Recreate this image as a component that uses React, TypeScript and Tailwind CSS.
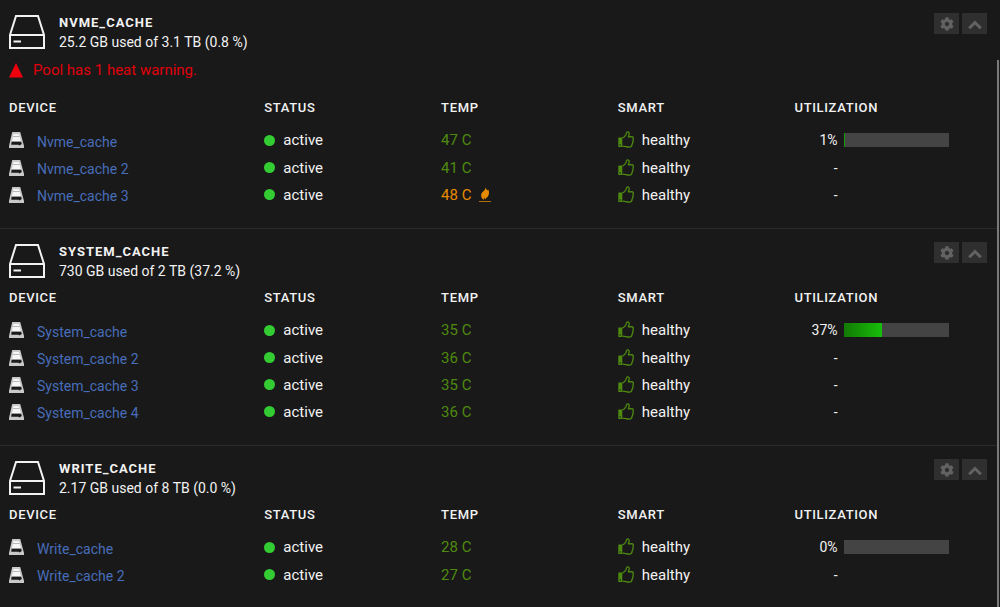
import React from "react";
import { FaCog } from "react-icons/fa";

type Device = { name: string; temp: number; hot?: boolean; use?: number };
type Pool = { name: string; usage: string; warning?: string; devices: Device[] };

const pools: Pool[] = [
  {
    name: "NVME_CACHE",
    usage: "25.2 GB used of 3.1 TB (0.8 %)",
    warning: "Pool has 1 heat warning.",
    devices: [
      { name: "Nvme_cache", temp: 47, use: 1 },
      { name: "Nvme_cache 2", temp: 41 },
      { name: "Nvme_cache 3", temp: 48, hot: true },
    ],
  },
  {
    name: "SYSTEM_CACHE",
    usage: "730 GB used of 2 TB (37.2 %)",
    devices: [
      { name: "System_cache", temp: 35, use: 37 },
      { name: "System_cache 2", temp: 36 },
      { name: "System_cache 3", temp: 35 },
      { name: "System_cache 4", temp: 36 },
    ],
  },
  {
    name: "WRITE_CACHE",
    usage: "2.17 GB used of 8 TB (0.0 %)",
    devices: [
      { name: "Write_cache", temp: 28, use: 0 },
      { name: "Write_cache 2", temp: 27 },
    ],
  },
];

function PoolIcon() {
  return (
    <svg className="h-9 w-9 shrink-0" viewBox="0 0 36 36" fill="none" stroke="#f2f2f2" strokeWidth="2" aria-hidden="true">
      <path d="M1 21 L7 2 H29 L35 21 V34 H1 Z" />
      <path d="M1 21 H35" />
      <path d="M4.5 27.5 H12" />
    </svg>
  );
}

function DiskIcon() {
  return (
    <svg className="h-4 w-4 shrink-0" viewBox="0 0 16 16" aria-hidden="true">
      <path d="M3.2 0 H11.2 L15 14 V16 H0 V14 Z" fill="#c9c9c9" />
      <path d="M4.5 2 H10 L11.8 9 H3 Z" fill="#f6f6f6" />
      <path d="M4 4 H10.6 V5 H4 Z" fill="#b9b9b9" />
      <path d="M2.6 9.8 H12.2 L12.8 12 L10.5 13.4 L9.5 12.8 H2.2 Z" fill="#1b1b1b" />
    </svg>
  );
}

function FireIcon() {
  return (
    <svg className="h-4 w-3" viewBox="0 0 12 16" fill="#e68a00" aria-hidden="true">
      <path d="M6.8 0.5 C7.2 2 7.6 3 8.6 3.2 C9 3.2 9.2 3 9.3 2.6 C10.2 4.4 10.4 7 9.2 9 C8.2 10.6 6.6 11.4 6 12.8 C5.6 12 6 11 6.2 10.4 C5 11 4.8 12 5 12.8 C3 11.8 1.8 9.8 2.2 7.4 C2.6 5 6.2 3.6 6.8 0.5 Z" />
      <path d="M0 14 H12 V15 H0 Z" fillOpacity="0.75" />
    </svg>
  );
}

function ThumbIcon() {
  return (
    <svg className="h-[18px] w-4" viewBox="0 0 16 18" aria-hidden="true">
      <path d="M0.8 6.5 H4.3 V16 H0.8 Q0.3 16 0.3 15.4 V7.1 Q0.3 6.5 0.8 6.5 Z" fill="#4f8a10" />
      <path
        d="M4.5 7 C6.2 6.6 7 5.4 7.8 4 C8.4 2.8 8.2 1 9.4 0.8 C11 0.7 11.6 2.2 11 3.8 L10.4 5.8 L13.8 5.6 C15.1 5.7 15.5 6.8 15.1 8 C15.3 9 15.1 10 14.8 10.8 C14.9 11.8 14.6 12.6 14.1 13.2 C14 15 13.2 16.1 11.4 16.2 C9 16.3 7.6 15.4 4.5 15.1"
        fill="none"
        stroke="#4f8a10"
        strokeWidth="1.3"
        strokeLinejoin="round"
      />
      <circle cx="2.2" cy="14" r="0.7" fill="#191919" />
    </svg>
  );
}

function ChevronIcon() {
  return (
    <svg className="h-3.5 w-3.5" viewBox="0 0 14 14" fill="none" stroke="currentColor" strokeWidth="3" aria-hidden="true">
      <path d="M1.2 11.3 L7 5.5 L12.8 11.3" />
    </svg>
  );
}

function Row({ device }: { device: Device }) {
  const hasUse = device.use !== undefined;
  return (
    <tr className={hasUse ? "h-7" : "h-[27px]"}>
      <td className="p-0">
        <div className="flex items-center gap-3">
          <DiskIcon />
          <a href="#" className="pt-[3px] text-sm text-[#486dba]">{device.name}</a>
        </div>
      </td>
      <td className="p-0">
        <div className="flex items-center gap-2">
          <span className="h-[11px] w-[11px] rounded-full bg-[#33cc33]" />
          <span>active</span>
        </div>
      </td>
      <td className={device.hot ? "p-0 text-[#e68a00]" : "p-0 text-[#4f8a10]"}>
        <div className="flex items-center gap-2">
          <span>{device.temp} C</span>
          {device.hot && <FireIcon />}
        </div>
      </td>
      <td className="p-0">
        <div className="flex items-center gap-2">
          <ThumbIcon />
          <span>healthy</span>
        </div>
      </td>
      <td className="p-0">
        <div className="flex items-center gap-1.5">
          <span className="w-[43px] text-right text-sm">{hasUse ? `${device.use}%` : "-"}</span>
          {hasUse && (
            <div className="h-3.5 w-[105px] bg-[#444444]">
              <div
                className="h-full bg-linear-to-r from-[#127a05] to-[#17bf0b]"
                style={{ width: `${device.use}%` }}
              />
            </div>
          )}
        </div>
      </td>
    </tr>
  );
}

function PoolSection({ pool }: { pool: Pool }) {
  return (
    <section className="border-b border-[#2b2b2b] pt-[13px] pr-1.5 pb-5 pl-[9px]">
      <header className="flex h-[38px] items-center gap-3.5 pr-1">
        <PoolIcon />
        <div className="flex-1">
          <h2 className="text-[13px] leading-5 font-bold tracking-[1px]">{pool.name}</h2>
          <p className="text-sm leading-[18px]">{pool.usage}</p>
        </div>
        <div className="flex gap-[3px] self-start">
          <button type="button" aria-label="Settings" className="flex h-[21px] w-[25px] items-center justify-center bg-[#2f2f2f] text-[#626262]">
            <FaCog className="h-3.5 w-3.5" />
          </button>
          <button type="button" aria-label="Collapse" className="flex h-[21px] w-[25px] items-center justify-center bg-[#2f2f2f] text-[#626262]">
            <ChevronIcon />
          </button>
        </div>
      </header>
      {pool.warning && (
        <p className="flex h-[39px] items-center gap-2 text-[15px] text-[#e0000c]">
          <svg className="h-4 w-4" viewBox="0 0 16 16" fill="#f0000c" aria-hidden="true">
            <path d="M7 0 L14 14.5 H0 Z" />
          </svg>
          {pool.warning}
        </p>
      )}
      <table className="w-full table-fixed border-collapse text-left text-[15px] leading-5">
        <thead>
          <tr className="h-9 text-[13px] tracking-wider">
            <th className="w-[26%] p-0 font-medium">DEVICE</th>
            <th className="w-[18%] p-0 font-medium">STATUS</th>
            <th className="w-[18%] p-0 font-medium">TEMP</th>
            <th className="w-[18%] p-0 font-medium">SMART</th>
            <th className="w-[20%] p-0 font-medium">UTILIZATION</th>
          </tr>
        </thead>
        <tbody>
          {pool.devices.map((d) => (
            <Row key={d.name} device={d} />
          ))}
        </tbody>
      </table>
    </section>
  );
}

export default function App() {
  return (
    <div className="flex min-h-screen bg-[#191919] font-['Roboto',sans-serif] text-[#f2f2f2]">
      <main className="min-w-0 flex-1">
        {pools.map((p) => (
          <PoolSection key={p.name} pool={p} />
        ))}
      </main>
      <div className="mt-15 mr-px w-0.5 bg-[#7a7a7a]" />
    </div>
  );
}
